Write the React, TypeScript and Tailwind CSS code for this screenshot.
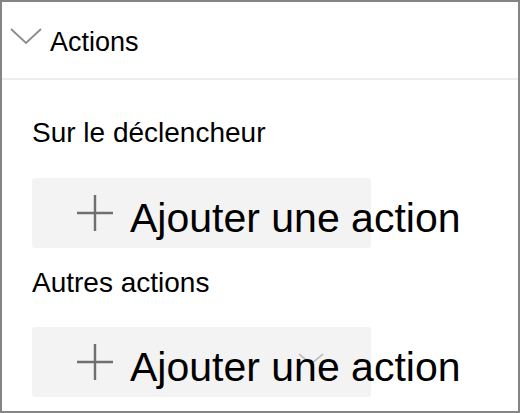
import { Fragment } from "react";

const FONT = { fontFamily: '"Liberation Sans", Arial, sans-serif' };

function PlusIcon() {
  return (
    <svg width="36" height="36" viewBox="0 0 36 36" className="shrink-0">
      <path d="M18 0V36M0 18H36" stroke="#6f6f6f" strokeWidth="2.4" fill="none" />
    </svg>
  );
}

function AddButton({ ghostChevron = false }: { ghostChevron?: boolean }) {
  return (
    <div className="relative flex h-[70px] w-[339px] items-center rounded-[3px] bg-[#f3f3f3] pl-[45px]">
      {ghostChevron && (
        <svg
          width="26"
          height="12"
          viewBox="0 0 26 12"
          className="absolute left-[266px] top-[26px]"
        >
          <path d="M1 1L13 11L25 1" stroke="#b5b5b5" strokeWidth="1.6" fill="none" />
        </svg>
      )}
      <PlusIcon />
      <span className="relative ml-[17px] mt-[10px] whitespace-nowrap text-[41px] leading-[41px] text-black">
        Ajouter une action
      </span>
    </div>
  );
}

export default function App() {
  const sections = [
    { label: "Sur le déclencheur", top: "mt-[39px]", gap: "mt-[31px]", ghost: false },
    { label: "Autres actions", top: "mt-[21px]", gap: "mt-[30px]", ghost: true },
  ];

  return (
    <div
      className="box-border h-[413px] w-[520px] overflow-hidden border-2 border-[#858585] bg-white"
      style={FONT}
    >
      <div className="flex h-[76px] items-start pl-[8px] pt-[26px]">
        <svg width="32" height="16" viewBox="0 0 32 16" className="shrink-0">
          <path d="M1 1L16 15L31 1" stroke="#8c8c8c" strokeWidth="1.8" fill="none" />
        </svg>
        <span className="ml-[8px] mt-[1px] text-[27px] leading-[27px] text-black">Actions</span>
      </div>
      <div className="h-[2px] bg-[#ededed]" />

      <div className="pl-[30px]">
        {sections.map((s) => (
          <Fragment key={s.label}>
            <div className={`${s.top} whitespace-nowrap text-[28px] leading-[28px] text-black`}>
              {s.label}
            </div>
            <div className={s.gap}>
              <AddButton ghostChevron={s.ghost} />
            </div>
          </Fragment>
        ))}
      </div>
    </div>
  );
}
